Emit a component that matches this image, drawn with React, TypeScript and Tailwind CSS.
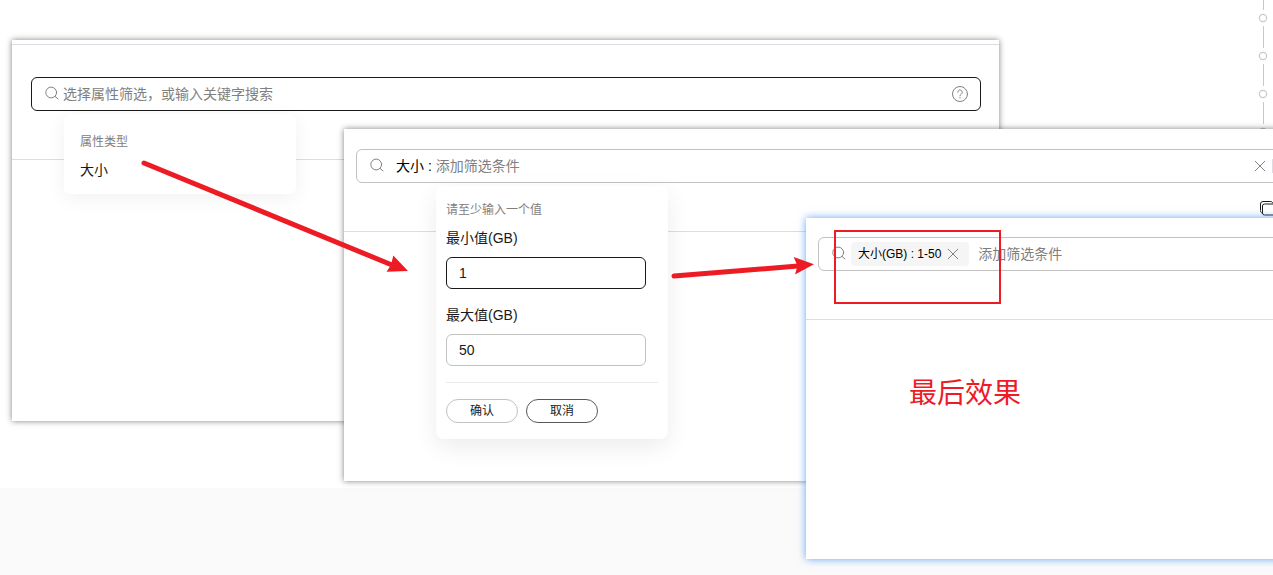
import React from "react";

const SearchIcon = () => (
  <svg
    className="w-3.5 h-4 shrink-0"
    viewBox="0 0 14 16"
    fill="none"
    stroke="#808080"
    strokeLinecap="round"
  >
    <circle cx="6.2" cy="6.5" r="5.4" />
    <path d="M10.3 10.6L13 12.9" />
  </svg>
);

const CloseIcon = () => (
  <svg
    className="w-3 h-3"
    viewBox="0 0 12 12"
    fill="none"
    stroke="#808080"
    strokeLinecap="round"
  >
    <path d="M1.2 1.2l9.6 9.6M10.8 1.2L1.2 10.8" />
  </svg>
);

const HelpIcon = () => (
  <svg
    className="w-4 h-4"
    viewBox="0 0 16 16"
    fill="none"
    stroke="#808080"
    strokeLinecap="round"
  >
    <circle cx="8" cy="8" r="7.5" />
    <path d="M5.8 6.2a2.2 2.2 0 114 1.3c-.6.8-1.8 1.1-1.8 2.3" />
    <path d="M8 11.6v.5" />
  </svg>
);

const CopyIcon = () => (
  <svg
    className="w-4 h-4"
    viewBox="0 0 16 16"
    fill="none"
    stroke="#191919"
    strokeLinejoin="round"
  >
    <path d="M2.5 12.2C1.2 11.8.5 11 .5 9.5V3A2.5 2.5 0 013 .5h7.5c1.2 0 2 .6 2.300 1.700" />
    <rect x="2.500" y="3" width="13" height="11" rx="2" />
  </svg>
);

// Oś z kółkami przy prawej krawędzi
function Timeline() {
  return (
    <svg
      className="absolute top-0 right-1 w-3 h-[140px]"
      viewBox="0 0 12 140"
      fill="none"
      stroke="#c8c8c8"
    >
      <path d="M6.5 0v10M6.5 26v22M6.5 64v22M6.5 102v22" />
      {[18, 56, 94, 132].map((y) => (
        <circle key={y} cx="6" cy={y} r="3.6" strokeWidth="1.2" />
      ))}
    </svg>
  );
}

function FieldGroup({ id, label, value, active = false }) {
  return (
    <div className="mb-4 flex flex-col gap-[9px]">
      <label htmlFor={id} className="text-sm text-[#191919]">
        {label}
      </label>
      <input
        id={id}
        type="text"
        defaultValue={value}
        className={`w-[200px] h-8 px-3 rounded-md border bg-white text-sm text-[#191919] outline-none ${
          active ? "border-[#191919]" : "border-[#c2c2c2]"
        }`}
      />
    </div>
  );
}

// Krok 1: wybór atrybutu
function AttributeStep() {
  return (
    <section className="absolute left-3 right-[274px] top-10 h-[381px] bg-white pt-1 shadow-[0_0_6px_rgba(0,0,0,0.5)]">
      <div className="relative border-y border-[#dcdce2] pl-[19px] pr-[18px] pt-8 pb-12">
        <div className="flex items-center gap-1 h-[34px] pl-[13px] pr-3 rounded-md border border-[#191919]">
          <SearchIcon />
          <input
            type="text"
            aria-label="选择属性筛选，或输入关键字搜索"
            placeholder="选择属性筛选，或输入关键字搜索"
            className="flex-1 min-w-0 bg-transparent text-sm text-[#191919] placeholder:text-[#808080] outline-none"
          />
          <button type="button" aria-label="?">
            <HelpIcon />
          </button>
        </div>

        <div className="absolute left-[52px] top-[69px] w-[232px] rounded-md bg-white px-4 pt-[18px] pb-3.5 shadow-[0_4px_20px_rgba(0,0,0,0.06)] flex flex-col gap-2">
          <p className="text-xs leading-5 text-[#808080]">属性类型</p>
          <button
            type="button"
            className="text-left text-sm leading-5 text-[#191919]"
          >
            大小
          </button>
        </div>
      </div>
    </section>
  );
}

// Krok 2: podanie zakresu
function RangeStep() {
  return (
    <section className="absolute left-[344px] -right-8 top-[129px] h-[352px] bg-white shadow-[0_0_6px_rgba(0,0,0,0.5)]">
      <div className="relative border-b border-[#dcdce2] pl-3 pt-5 pb-12">
        <div className="flex items-center h-[34px] pl-[13px] rounded-l-md border border-[#c2c2c2]">
          <SearchIcon />
          <label
            htmlFor="range-filter"
            className="ml-3 mr-1 whitespace-nowrap text-sm text-black"
          >
            大小 :
          </label>
          <input
            id="range-filter"
            type="text"
            placeholder="添加筛选条件"
            className="flex-1 min-w-0 bg-transparent text-sm placeholder:text-[#808080] outline-none"
          />
          <button type="button" aria-label="×">
            <CloseIcon />
          </button>
          <span className="ml-1.5 mr-[31px] h-3.5 border-l border-[#dcdce2]"></span>
        </div>
        <button
          type="button"
          aria-label="⧉"
          className="absolute right-[29px] top-[72px]"
        >
          <CopyIcon />
        </button>

        <form className="absolute left-[92px] top-[57px] w-[232px] rounded-lg bg-white px-2.5 py-4 shadow-[0_8px_24px_rgba(0,0,0,0.08)]">
          <p className="mb-2.5 text-xs text-[#808080]">请至少输入一个值</p>
          <FieldGroup id="min-size" label="最小值(GB)" value="1" active />
          <FieldGroup id="max-size" label="最大值(GB)" value="50" />
          <div className="border-t border-[#ebebeb] pt-4 flex gap-2">
            <button
              type="button"
              className="w-[72px] h-6 rounded-full border border-[#c2c2c2] text-xs text-[#191919]"
            >
              确认
            </button>
            <button
              type="button"
              className="w-[72px] h-6 rounded-full border border-[#595959] text-xs text-[#191919]"
            >
              取消
            </button>
          </div>
        </form>
      </div>
    </section>
  );
}

// Krok 3: gotowy filtr
function ResultStep() {
  return (
    <section className="absolute left-[806px] -right-8 top-[218px] h-[341px] bg-white shadow-[0_0_8px_rgba(60,140,240,0.8)]">
      <div className="border-b border-[#dcdce2] pl-3 pt-[19px] pb-12">
        <div className="flex items-center gap-[5px] h-[34px] pl-[13px] rounded-l-md border border-[#c2c2c2]">
          <SearchIcon />
          <div className="flex items-center gap-1.5 h-6 pl-[7px] pr-2.5 rounded bg-[#f5f5f5]">
            <span className="whitespace-nowrap text-xs text-black">
              大小(GB) : 1-50
            </span>
            <button type="button" aria-label="×">
              <CloseIcon />
            </button>
          </div>
          <input
            type="text"
            aria-label="添加筛选条件"
            placeholder="添加筛选条件"
            className="flex-1 min-w-0 pl-1 bg-transparent text-sm placeholder:text-[#808080] outline-none"
          />
        </div>
      </div>
      <div className="absolute left-7 top-3 w-[167px] h-[74px] border-2 border-[#ed1c24]"></div>
      <p className="pl-[103px] pt-[54px] text-[28px] leading-10 text-[#ed1c24]">
        最后效果
      </p>
    </section>
  );
}

// Czerwone strzałki łączące kolejne kroki
function Arrows() {
  return (
    <svg
      className="absolute left-0 top-0 w-[830px] h-[290px] pointer-events-none"
      viewBox="0 0 830 290"
      fill="#ed1c24"
      stroke="none"
    >
      <path
        d="M144 163L392 265M674 276L798 266"
        stroke="#ed1c24"
        strokeWidth="5"
        strokeLinecap="round"
      />
      <path d="M408 271L393.300 255.500L391 265L386.500 271.800Z" />
      <path d="M814 264.300L793.700 257L797.500 266L795 274.500Z" />
    </svg>
  );
}

export default function App() {
  return (
    <main className="relative min-h-screen overflow-hidden bg-[#fafafa] font-['Liberation_Sans','Noto_Sans_CJK_SC',sans-serif]">
      <div className="h-[488px] bg-white"></div>
      <Timeline />
      <AttributeStep />
      <RangeStep />
      <ResultStep />
      <Arrows />
    </main>
  );
}
